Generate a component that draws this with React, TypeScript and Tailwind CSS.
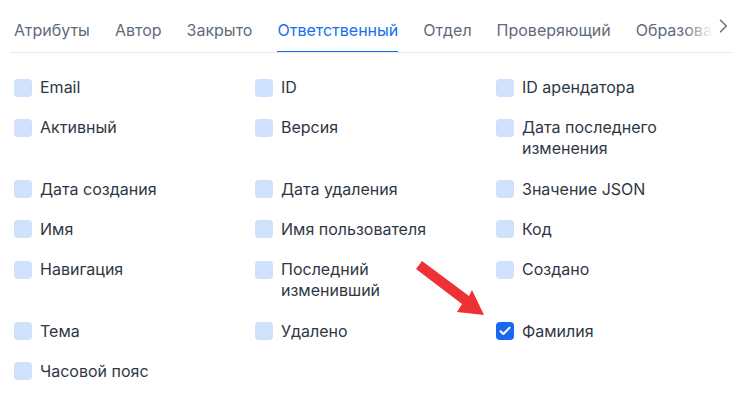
import React from "react";

const tabs = ["Атрибуты", "Автор", "Закрыто", "Ответственный", "Отдел", "Проверяющий", "Образование"];

const items: { label: string; checked?: boolean }[] = [
  { label: "Email" },
  { label: "ID" },
  { label: "ID арендатора" },
  { label: "Активный" },
  { label: "Версия" },
  { label: "Дата последнего изменения" },
  { label: "Дата создания" },
  { label: "Дата удаления" },
  { label: "Значение JSON" },
  { label: "Имя" },
  { label: "Имя пользователя" },
  { label: "Код" },
  { label: "Навигация" },
  { label: "Последний изменивший" },
  { label: "Создано" },
  { label: "Тема" },
  { label: "Удалено" },
  { label: "Фамилия", checked: true },
  { label: "Часовой пояс" },
];

function Box({ checked }: { checked?: boolean }) {
  if (checked) {
    return (
      <span className="mt-[1.5px] flex h-[18px] w-[18px] shrink-0 items-center justify-center rounded-[4px] bg-[#1769ef]">
        <svg width="12" height="10" viewBox="0 0 12 10" fill="none">
          <path d="M1.5 5.2 4.4 8 10.5 1.8" stroke="white" strokeWidth="2" strokeLinecap="round" strokeLinejoin="round" />
        </svg>
      </span>
    );
  }
  return <span className="mt-[1.5px] h-[18px] w-[18px] shrink-0 rounded-[4px] bg-[#cfe1fd]" />;
}

export default function App() {
  return (
    <div className="relative h-[413px] w-[746px] overflow-hidden bg-white" style={{ fontFamily: "Inter, 'Noto Sans', sans-serif" }}>
      <div className="ml-[10px] flex w-[723px] items-stretch border-b border-[#e3eaf3]">
        <div className="relative flex flex-1 gap-[25px] overflow-hidden pl-[4px]">
          {tabs.map((t) => {
            const active = t === "Ответственный";
            return (
              <div
                key={t}
                className={
                  "-mb-px shrink-0 whitespace-nowrap border-b-2 pb-[10px] pt-[20px] text-[16px] leading-[21px] " +
                  (active ? "border-[#1570ef] text-[#1570ef]" : "border-transparent text-[#5f6b7b]")
                }
              >
                {t}
              </div>
            );
          })}
          <div className="pointer-events-none absolute right-0 top-0 h-full w-[28px] bg-gradient-to-r from-white/0 to-white" />
        </div>
        <div className="flex w-[20px] shrink-0 items-center justify-center">
          <svg width="9" height="14" viewBox="0 0 9 14" fill="none">
            <path d="M1.5 1.2 7.3 7 1.5 12.8" stroke="#6b7685" strokeWidth="1.6" strokeLinecap="round" strokeLinejoin="round" />
          </svg>
        </div>
      </div>

      <div className="mt-[24px] grid grid-cols-[241px_241px_241px] gap-y-[19.33px] pl-[14px]">
        {items.map((it) => (
          <div key={it.label} className="flex items-start gap-[8px]">
            <Box checked={it.checked} />
            <span className="max-w-[180px] text-[16px] leading-[21px] text-[#2f3744]">{it.label}</span>
          </div>
        ))}
      </div>

      <svg className="pointer-events-none absolute left-0 top-0" width="746" height="413" viewBox="0 0 746 413">
        <polygon points="422,261 469,296 472,290 484,315 457,312 462,304 416,269" fill="#ef3034" />
      </svg>
    </div>
  );
}
